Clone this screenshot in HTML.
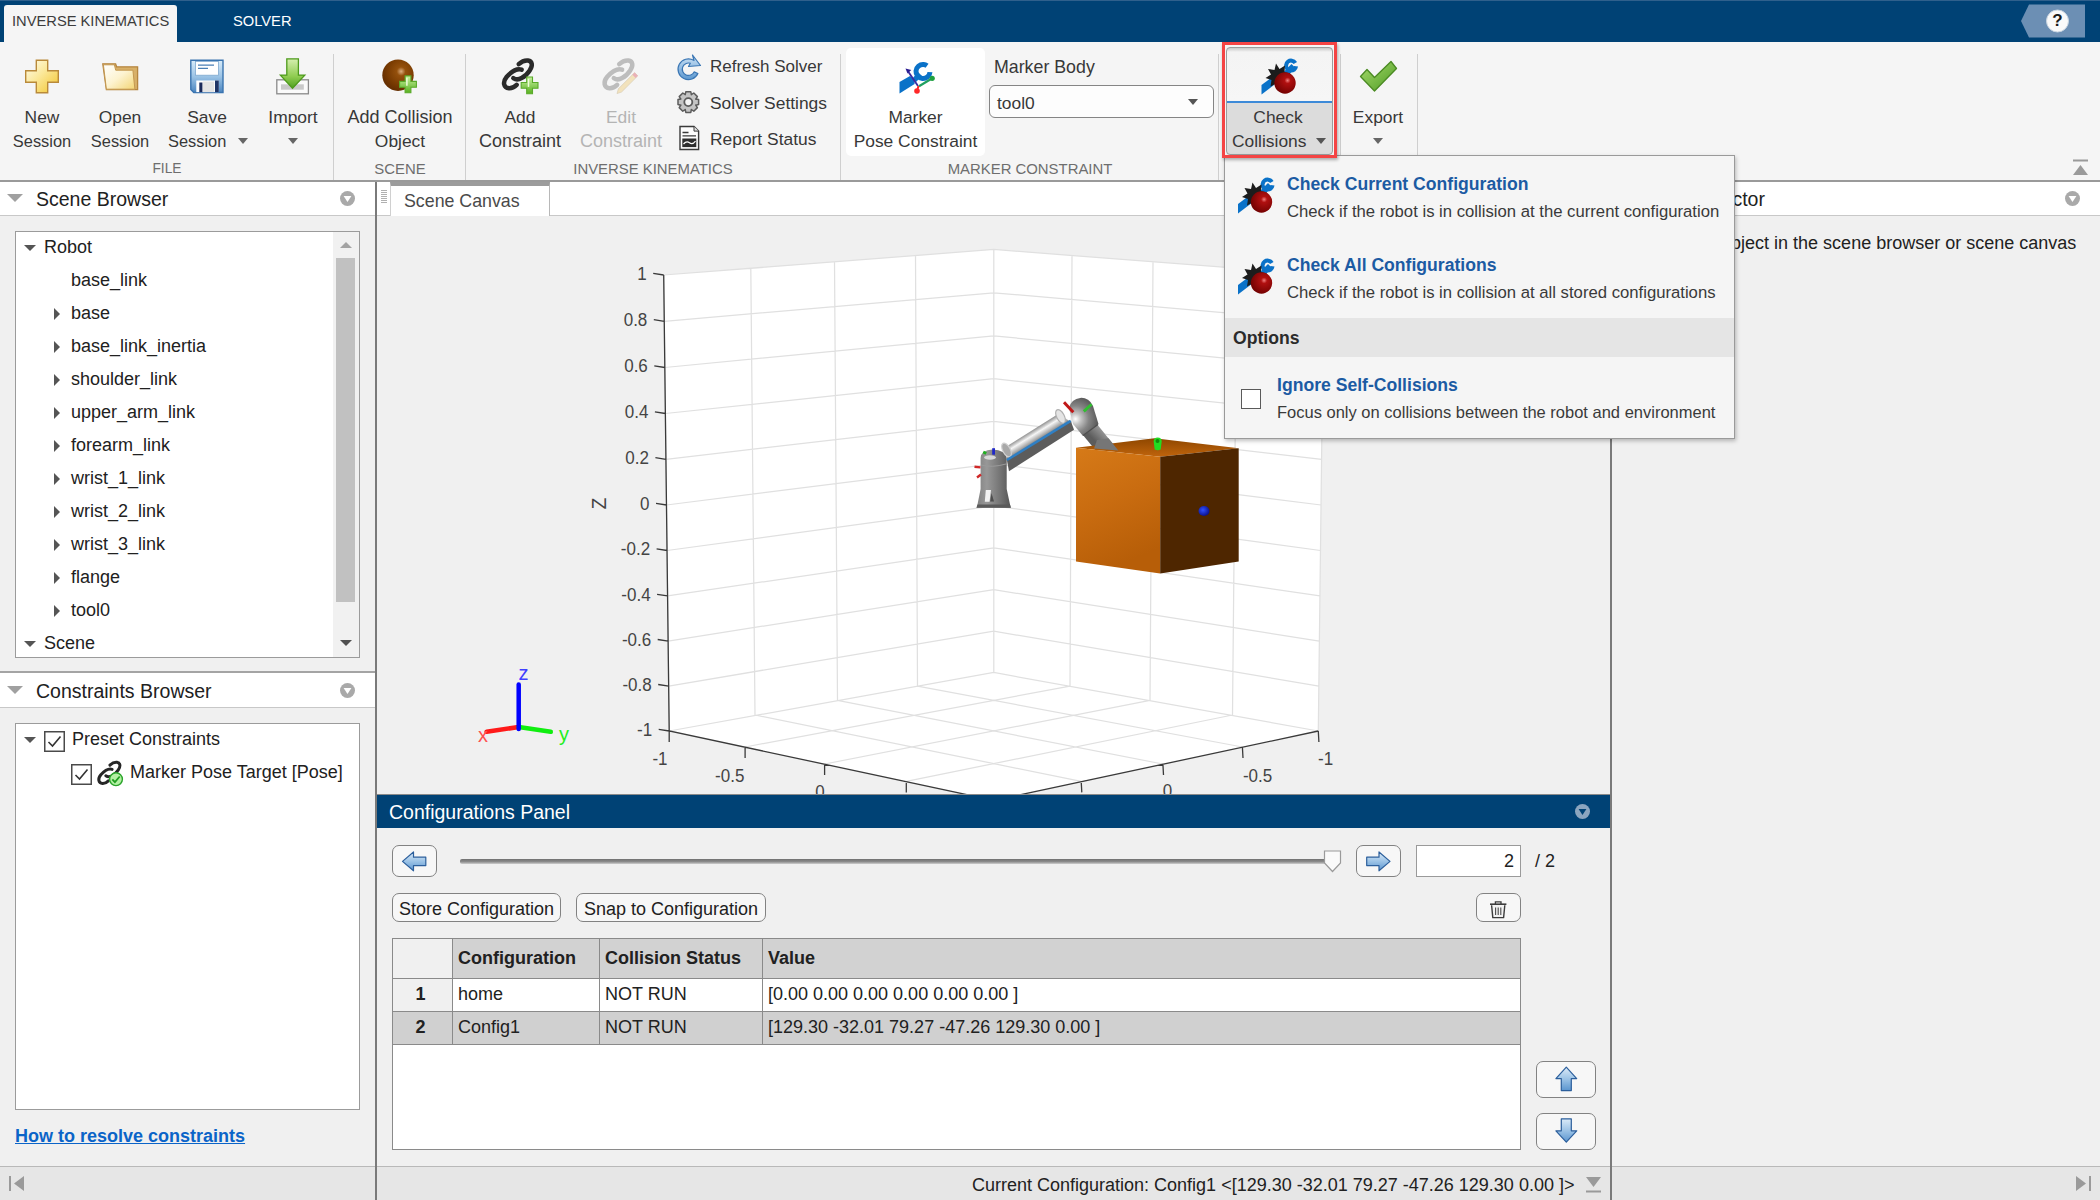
<!DOCTYPE html>
<html lang="en">
<head>
<meta charset="utf-8">
<title>Inverse Kinematics Designer</title>
<style>
html,body{margin:0;padding:0;}
body{width:2100px;height:1200px;position:relative;overflow:hidden;background:#f0f0f0;font-family:"Liberation Sans",sans-serif;font-size:18px;color:#212121;}
.a{position:absolute;}
.t{position:absolute;white-space:pre;line-height:20px;height:20px;}
.c{text-align:center;}
.ts{color:#383838;font-size:17.4px;}
.sec{color:#6e6e6e;font-size:14.9px;}
.vsep{position:absolute;width:1px;background:#cfcfcf;top:54px;height:126px;}
.hdr{position:absolute;background:#fff;height:34px;border-bottom:1px solid #c8c8c8;}
.hdr .t{font-size:19.5px;top:7px;}
.tri{position:absolute;width:0;height:0;border-style:solid;}
.tree{font-size:18px;color:#212121;}
.btn{position:absolute;box-sizing:border-box;border:1.5px solid #828282;border-radius:7px;background:#f7f7f7;}
</style>
</head>
<body>

<!-- ===== top tab bar ===== -->
<div class="a" id="topbar" style="left:0;top:0;width:2100px;height:42px;background:#004275;border-top:1px solid #2f608c;box-sizing:border-box;"></div>
<div class="a" style="left:4px;top:5px;width:173px;height:37px;background:#f5f5f5;border-radius:3px 3px 0 0;"></div>
<div class="t" style="left:12px;top:11px;font-size:14.7px;color:#3c3c3c;">INVERSE KINEMATICS</div>
<div class="t" style="left:233px;top:11px;font-size:14.7px;color:#fff;">SOLVER</div>

<!-- ===== toolstrip ===== -->
<div class="a" id="toolstrip" style="left:0;top:42px;width:2100px;height:138px;background:#f5f5f5;border-bottom:2px solid #9a9a9a;"></div>

<!--TOOLSTRIP-->
<!-- separators -->
<div class="vsep" style="left:333px;"></div>
<div class="vsep" style="left:465px;"></div>
<div class="vsep" style="left:840px;"></div>
<div class="vsep" style="left:1218px;"></div>
<div class="vsep" style="left:1340px;"></div>
<div class="vsep" style="left:1417px;"></div>

<!-- FILE section -->
<div class="t c ts" style="left:0;width:84px;top:107px;">New</div>
<div class="t c ts" style="left:0;width:84px;top:131px;font-size:16.4px;">Session</div>
<div class="t c ts" style="left:78px;width:84px;top:107px;">Open</div>
<div class="t c ts" style="left:78px;width:84px;top:131px;font-size:16.4px;">Session</div>
<div class="t c ts" style="left:165px;width:84px;top:107px;">Save</div>
<div class="t ts" style="left:168px;top:131px;font-size:16.4px;">Session</div>
<div class="tri" style="left:238px;top:138px;border-width:6px 5.5px 0 5.5px;border-color:#666 transparent transparent transparent;"></div>
<div class="t c ts" style="left:251px;width:84px;top:107px;">Import</div>
<div class="tri" style="left:288px;top:138px;border-width:6px 5.5px 0 5.5px;border-color:#666 transparent transparent transparent;"></div>
<div class="t c sec" style="left:126px;width:82px;top:159px;font-size:13.8px;">FILE</div>

<!-- SCENE section -->
<div class="t c ts" style="left:340px;width:120px;top:107px;font-size:18px;">Add Collision</div>
<div class="t c ts" style="left:340px;width:120px;top:131px;">Object</div>
<div class="t c sec" style="left:340px;width:120px;top:159px;">SCENE</div>

<!-- INVERSE KINEMATICS section -->
<div class="t c ts" style="left:470px;width:100px;top:107px;">Add</div>
<div class="t c ts" style="left:470px;width:100px;top:131px;font-size:18px;">Constraint</div>
<div class="t c ts" style="left:571px;width:100px;top:107px;color:#b4b4b4;">Edit</div>
<div class="t c ts" style="left:571px;width:100px;top:131px;font-size:18px;color:#b4b4b4;">Constraint</div>
<div class="t ts" style="left:710px;top:57px;font-size:17px;">Refresh Solver</div>
<div class="t ts" style="left:710px;top:93px;">Solver Settings</div>
<div class="t ts" style="left:710px;top:129px;">Report Status</div>
<div class="t c sec" style="left:553px;width:200px;top:159px;">INVERSE KINEMATICS</div>

<!-- MARKER CONSTRAINT section -->
<div class="a" style="left:846px;top:48px;width:139px;height:108px;background:#fff;border-radius:5px;"></div>
<div class="t c ts" style="left:846px;width:139px;top:107px;">Marker</div>
<div class="t c ts" style="left:846px;width:139px;top:131px;">Pose Constraint</div>
<div class="t ts" style="left:994px;top:57px;font-size:17.8px;">Marker Body</div>
<div class="a" style="left:989px;top:85px;width:225px;height:33px;box-sizing:border-box;border:1.5px solid #858585;border-radius:6px;background:#fdfdfd;"></div>
<div class="t ts" style="left:997px;top:93px;">tool0</div>
<div class="tri" style="left:1188px;top:99px;border-width:6px 5.5px 0 5.5px;border-color:#555 transparent transparent transparent;"></div>
<div class="t c sec" style="left:930px;width:200px;top:159px;">MARKER CONSTRAINT</div>

<!-- Check Collisions -->
<div class="a" style="left:1226px;top:47px;width:107px;height:108px;box-sizing:border-box;border:1px solid #9c9c9c;border-radius:4px;background:linear-gradient(#c9c9c9 0,#f4f4f4 4px,#f6f6f6 53px,#3d8ad8 53px,#3d8ad8 55px,#dcdcdc 55px);"></div>
<div class="t c ts" style="left:1228px;width:100px;top:107px;">Check</div>
<div class="t ts" style="left:1232px;top:131px;">Collisions</div>
<div class="tri" style="left:1316px;top:138px;border-width:6px 5.5px 0 5.5px;border-color:#555 transparent transparent transparent;"></div>
<div class="t c ts" style="left:1338px;width:80px;top:107px;">Export</div>
<div class="tri" style="left:1373px;top:138px;border-width:6px 5.5px 0 5.5px;border-color:#666 transparent transparent transparent;"></div>
<!--/TOOLSTRIP-->

<!--LEFT-->
<!-- left dock -->
<div class="a" style="left:0;top:182px;width:375px;height:984px;background:#f0f0f0;"></div>
<div class="a" style="left:375px;top:182px;width:2px;height:1018px;background:#7a7a7a;"></div>
<div class="hdr" style="left:0;top:182px;width:375px;height:33px;"><div class="tri" style="left:7px;top:12px;border-width:8.5px 8px 0 8px;border-color:#a0a0a0 transparent transparent transparent;"></div><div class="t" style="left:36px;top:7px;">Scene Browser</div><svg class="a" style="left:339px;top:8px;" width="17" height="17" viewBox="0 0 17 17"><circle cx="8.5" cy="8.5" r="7.5" fill="#a9a9a9"/><path d="M4.6 6 L12.4 6 L8.5 12 Z" fill="#fff"/></svg></div>
<div class="a" style="left:15px;top:231px;width:345px;height:427px;box-sizing:border-box;border:1px solid #9b9b9b;background:#fff;"></div>
<div class="a" style="left:333px;top:232px;width:26px;height:425px;background:#f1f1f1;"></div>
<div class="a" style="left:336px;top:258px;width:19px;height:344px;background:#c1c1c1;"></div>
<div class="tri" style="left:340px;top:242px;border-width:0 6px 6px 6px;border-color:transparent transparent #a3a3a3 transparent;"></div>
<div class="tri" style="left:340px;top:640px;border-width:6px 6px 0 6px;border-color:#505050 transparent transparent transparent;"></div>
<div class="tri" style="left:24px;top:245px;border-width:6px 6px 0 6px;border-color:#555 transparent transparent transparent;"></div>
<div class="t tree" style="left:44px;top:237px;">Robot</div>
<div class="t tree" style="left:71px;top:270px;">base_link</div>
<div class="tri" style="left:54px;top:308px;border-width:6px 0 6px 6px;border-color:transparent transparent transparent #555;"></div>
<div class="t tree" style="left:71px;top:303px;">base</div>
<div class="tri" style="left:54px;top:341px;border-width:6px 0 6px 6px;border-color:transparent transparent transparent #555;"></div>
<div class="t tree" style="left:71px;top:336px;">base_link_inertia</div>
<div class="tri" style="left:54px;top:374px;border-width:6px 0 6px 6px;border-color:transparent transparent transparent #555;"></div>
<div class="t tree" style="left:71px;top:369px;">shoulder_link</div>
<div class="tri" style="left:54px;top:407px;border-width:6px 0 6px 6px;border-color:transparent transparent transparent #555;"></div>
<div class="t tree" style="left:71px;top:402px;">upper_arm_link</div>
<div class="tri" style="left:54px;top:440px;border-width:6px 0 6px 6px;border-color:transparent transparent transparent #555;"></div>
<div class="t tree" style="left:71px;top:435px;">forearm_link</div>
<div class="tri" style="left:54px;top:473px;border-width:6px 0 6px 6px;border-color:transparent transparent transparent #555;"></div>
<div class="t tree" style="left:71px;top:468px;">wrist_1_link</div>
<div class="tri" style="left:54px;top:506px;border-width:6px 0 6px 6px;border-color:transparent transparent transparent #555;"></div>
<div class="t tree" style="left:71px;top:501px;">wrist_2_link</div>
<div class="tri" style="left:54px;top:539px;border-width:6px 0 6px 6px;border-color:transparent transparent transparent #555;"></div>
<div class="t tree" style="left:71px;top:534px;">wrist_3_link</div>
<div class="tri" style="left:54px;top:572px;border-width:6px 0 6px 6px;border-color:transparent transparent transparent #555;"></div>
<div class="t tree" style="left:71px;top:567px;">flange</div>
<div class="tri" style="left:54px;top:605px;border-width:6px 0 6px 6px;border-color:transparent transparent transparent #555;"></div>
<div class="t tree" style="left:71px;top:600px;">tool0</div>
<div class="tri" style="left:24px;top:641px;border-width:6px 6px 0 6px;border-color:#555 transparent transparent transparent;"></div>
<div class="t tree" style="left:44px;top:633px;">Scene</div>
<div class="a" style="left:0;top:671px;width:375px;height:2px;background:#a4a4a4;"></div>
<div class="hdr" style="left:0;top:673px;width:375px;height:34px;"><div class="tri" style="left:7px;top:13px;border-width:8.5px 8px 0 8px;border-color:#a0a0a0 transparent transparent transparent;"></div><div class="t" style="left:36px;top:8px;">Constraints Browser</div><svg class="a" style="left:339px;top:9px;" width="17" height="17" viewBox="0 0 17 17"><circle cx="8.5" cy="8.5" r="7.5" fill="#a9a9a9"/><path d="M4.6 6 L12.4 6 L8.5 12 Z" fill="#fff"/></svg></div>
<div class="a" style="left:15px;top:723px;width:345px;height:387px;box-sizing:border-box;border:1px solid #9b9b9b;background:#fff;"></div>
<div class="tri" style="left:24px;top:737px;border-width:6px 6px 0 6px;border-color:#555 transparent transparent transparent;"></div>
<svg class="a" style="left:43.5px;top:731px;" width="21" height="21" viewBox="0 0 21 21"><rect x="0.75" y="0.75" width="19.5" height="19.5" fill="#fff" stroke="#4a4a4a" stroke-width="1.5"/><path d="M4.5 11 L8.5 15 L16.5 5.5" fill="none" stroke="#333" stroke-width="1.6"/></svg>
<div class="t tree" style="left:72px;top:729px;">Preset Constraints</div>
<svg class="a" style="left:70.5px;top:763.5px;" width="21" height="21" viewBox="0 0 21 21"><rect x="0.75" y="0.75" width="19.5" height="19.5" fill="#fff" stroke="#4a4a4a" stroke-width="1.5"/><path d="M4.5 11 L8.5 15 L16.5 5.5" fill="none" stroke="#333" stroke-width="1.6"/></svg>
<!--ICON_LINKOK-->
<div class="t tree" style="left:130px;top:762px;">Marker Pose Target [Pose]</div>
<div class="t" style="left:15px;top:1126px;font-weight:bold;color:#0b64c8;text-decoration:underline;">How to resolve constraints</div>
<!--/LEFT-->

<!--CENTER-->
<!-- center: document area -->
<div class="a" style="left:377px;top:182px;width:1234px;height:33px;background:#fff;border-bottom:1px solid #c8c8c8;"></div>
<div class="a" style="left:381px;top:190px;width:6px;height:14px;background:repeating-linear-gradient(#b0b0b0 0,#b0b0b0 1px,#fff 1px,#fff 2px);"></div>
<div class="a" style="left:390px;top:182px;width:160px;height:34px;background:#fff;border-right:1px solid #b8b8b8;border-left:1px solid #d0d0d0;border-top:4px solid #9c9c9c;box-sizing:border-box;"></div>
<div class="t" style="left:404px;top:191px;font-size:17.8px;color:#4a4a4a;">Scene Canvas</div>
<div class="a" style="left:377px;top:216px;width:1234px;height:579px;background:#f0f0f0;overflow:hidden;"><!--PLOTB--><svg class="a" style="left:0;top:0;" width="1234" height="579" viewBox="377 216 1234 579" font-family="Liberation Sans, sans-serif">
<polygon points="663.7,275.0 993.8,249.5 1323.8,275.0 1318.3,731.0 993.8,800.4 669.2,731.0" fill="#fff"/>
<path d="M663.7,275.0L669.2,731.0M1323.8,275.0L1318.3,731.0M750.8,267.9L755.0,715.0M1236.8,267.9L1232.5,715.0M834.5,261.6L837.5,700.4M1153.0,261.6L1150.0,700.4M915.5,255.4L917.5,686.1M1072.0,255.4L1070.0,686.1M993.8,249.5L993.8,672.5M663.7,275.0L993.75,249.5L1323.8,275.0M664.3,321.3L993.75,292.8L1323.2,321.3M664.8,367.5L993.75,335.9L1322.7,367.5M665.4,413.5L993.75,378.7L1322.1,413.5M665.9,459.3L993.75,421.3L1321.6,459.3M666.5,505.0L993.75,463.8L1321.0,505.0M667.1,550.5L993.75,505.9L1320.4,550.5M667.6,595.9L993.75,547.9L1319.9,595.9M668.2,641.1L993.75,589.7L1319.3,641.1M668.7,686.1L993.75,631.2L1318.8,686.1M669.2,731.0L993.75,672.5L1318.3,731.0M755.0,715.0L1081.2,781.4M1232.5,715.0L906.3,781.4M837.5,700.4L1162.9,764.0M1150.0,700.4L824.6,764.0M917.5,686.1L1242.4,747.0M1070.0,686.1L745.1,747.0" fill="none" stroke="#e0e0e0" stroke-width="1.25"/>
<path d="M663.7,275.0L669.2,731.0L993.8,800.4L1318.3,731.0M663.7,275.0l-10.5,-1.6M664.3,321.3l-10.5,-1.6M664.8,367.5l-10.5,-1.6M665.4,413.5l-10.5,-1.6M665.9,459.3l-10.5,-1.6M666.5,505.0l-10.5,-1.6M667.1,550.5l-10.5,-1.6M667.6,595.9l-10.5,-1.6M668.2,641.1l-10.5,-1.6M668.7,686.1l-10.5,-1.6M669.2,731.0l-10.5,-1.6M669.2,731.0l0,11M745.1,747.0l0,11M824.6,764.0l0,11M906.3,781.4l0,11M1318.3,731.0l0.6,11M1242.4,747.0l0.6,11M1162.9,764.0l0.6,11M1081.2,781.4l0.6,11" fill="none" stroke="#3a3a3a" stroke-width="1.3"/>
<g font-size="19" fill="#444444">
<text transform="translate(646.7,279.6) scale(0.895,1)" text-anchor="end">1</text>
<text transform="translate(647.3,325.9) scale(0.895,1)" text-anchor="end">0.8</text>
<text transform="translate(647.8,372.1) scale(0.895,1)" text-anchor="end">0.6</text>
<text transform="translate(648.4,418.1) scale(0.895,1)" text-anchor="end">0.4</text>
<text transform="translate(648.9,463.9) scale(0.895,1)" text-anchor="end">0.2</text>
<text transform="translate(649.5,509.6) scale(0.895,1)" text-anchor="end">0</text>
<text transform="translate(650.1,555.1) scale(0.895,1)" text-anchor="end">-0.2</text>
<text transform="translate(650.6,600.5) scale(0.895,1)" text-anchor="end">-0.4</text>
<text transform="translate(651.2,645.7) scale(0.895,1)" text-anchor="end">-0.6</text>
<text transform="translate(651.7,690.7) scale(0.895,1)" text-anchor="end">-0.8</text>
<text transform="translate(652.2,735.6) scale(0.895,1)" text-anchor="end">-1</text>
<text transform="translate(660.0,765.4) scale(0.895,1)" text-anchor="middle">-1</text><text transform="translate(729.7,781.7) scale(0.895,1)" text-anchor="middle">-0.5</text><text transform="translate(820.0,798.2) scale(0.895,1)" text-anchor="middle">0</text>
<text transform="translate(1325.6,765.4) scale(0.895,1)" text-anchor="middle">-1</text><text transform="translate(1257.6,781.7) scale(0.895,1)" text-anchor="middle">-0.5</text><text transform="translate(1167.5,797.4) scale(0.895,1)" text-anchor="middle">0</text>
<text transform="translate(606.3,503.5) rotate(-90) scale(0.895,1)" text-anchor="middle" font-size="21">Z</text>
</g>
<!--S3B--><defs>
<linearGradient id="bxL" x1="0" y1="0" x2="0.3" y2="1"><stop offset="0" stop-color="#d67a18"/><stop offset="0.5" stop-color="#c96c10"/><stop offset="1" stop-color="#b75e08"/></linearGradient>
<linearGradient id="bxT" x1="0" y1="0" x2="0" y2="1"><stop offset="0" stop-color="#8e4700"/><stop offset="1" stop-color="#c0640c"/></linearGradient>
<linearGradient id="arm1" gradientUnits="userSpaceOnUse" x1="1032" y1="430" x2="1038.5" y2="440.5"><stop offset="0" stop-color="#8a8a8a"/><stop offset="0.4" stop-color="#f6f6f6"/><stop offset="0.75" stop-color="#b4b4b4"/><stop offset="1" stop-color="#808080"/></linearGradient>
<linearGradient id="arm2" gradientUnits="userSpaceOnUse" x1="1102" y1="424" x2="1090" y2="436"><stop offset="0" stop-color="#a8a8a8"/><stop offset="0.5" stop-color="#838383"/><stop offset="1" stop-color="#5c5c5c"/></linearGradient>
<linearGradient id="base" x1="0" y1="0" x2="1" y2="0"><stop offset="0" stop-color="#808080"/><stop offset="0.3" stop-color="#989898"/><stop offset="0.65" stop-color="#787878"/><stop offset="1" stop-color="#555555"/></linearGradient>
<radialGradient id="elb" gradientUnits="userSpaceOnUse" cx="1075.5" cy="419" r="22"><stop offset="0" stop-color="#ffffff"/><stop offset="0.25" stop-color="#c4c4c4"/><stop offset="0.6" stop-color="#858585"/><stop offset="1" stop-color="#5c5c5c"/></radialGradient>
<radialGradient id="bdot" cx="0.4" cy="0.4" r="0.6"><stop offset="0" stop-color="#3050ff"/><stop offset="1" stop-color="#0a1290"/></radialGradient>
</defs>
<path d="M976.5,507.7 L977.5,504.5 L980.6,489 L980.6,458 Q981,450 992.5,449.4 Q1005.5,450 1006.7,458 L1006.7,489 L1010,504.5 L1010.8,507.7 Z" fill="url(#base)"/>
<path d="M976.5,507.7 L977.5,504.5 L1010,504.5 L1010.8,507.7Z" fill="#5a5a5a"/>
<path d="M985.8,490 L991,490 L989.5,501.8 L984.8,501.8 Z" fill="#f2f2f2"/><path d="M991.5,493l2.5,8.5h-3.8z" fill="#4e4e4e"/>
<ellipse cx="990" cy="457.5" rx="6" ry="2.2" fill="#d8d8d8"/><path d="M981,465q11,3 25,-1" stroke="#9a9a9a" stroke-width="1" fill="none"/>
<path d="M974.5,466.8l6,0.6M977,477.5l4,-3" stroke="#d02828" stroke-width="2.4"/>
<path d="M983.2,452l3,1.6" stroke="#20b020" stroke-width="2.8"/><path d="M993.6,448.2l0,6.5" stroke="#2028c8" stroke-width="2.8"/>
<path d="M1006.9,460 L1070.7,420.8 L1074,429.8 L1009,471.3 Z" fill="#5c5c5c"/>
<path d="M1006.5,446.5 L1059,413.5 L1070,421.5 L1007,460 Z" fill="url(#arm1)"/>
<ellipse cx="1006.5" cy="450" rx="3.8" ry="7.5" transform="rotate(-28 1006.5 450)" fill="#a8a8a8" stroke="#d0d0d0" stroke-width="1.2"/>
<ellipse cx="1060.5" cy="416.5" rx="3.8" ry="7.5" transform="rotate(-28 1060.5 416.5)" fill="#e4e4e4" stroke="#b0b0b0" stroke-width="1.2"/>
<path d="M1006.9,460 L1070.7,420.8" stroke="#2f7fc4" stroke-width="2.6"/>
<path d="M1097.3,424.4 L1118.3,450.4 L1095.5,450.2 L1082.7,434.8 Z" fill="url(#arm2)"/>
<path d="M1069,408 a12.5,12.5 0 0 1 24,-2 L1098.5,424 L1083,436 L1073,424 Z" fill="url(#elb)"/>
<path d="M1083,435.5 L1098,424.5" stroke="#4e4e4e" stroke-width="1.2"/>
<path d="M1064,402.3l9.3,10" stroke="#c01818" stroke-width="3"/><path d="M1083.8,411.4l7.8,-7.2" stroke="#30c030" stroke-width="2.8"/>
<polygon points="1076,447.8 1154.4,438.3 1238.7,448.2 1160.2,456.7" fill="url(#bxT)"/>
<polygon points="1076,447.8 1160.2,456.7 1160.2,573.5 1076,561.5" fill="url(#bxL)"/>
<polygon points="1160.2,456.7 1238.7,448.2 1238.7,561.5 1160.2,573.5" fill="#4e2600"/>
<path d="M1094,448.4 L1118.3,450.6 L1108.5,438.3 L1097,440 Z" fill="#767676"/>
<path d="M1157.7,437.5 q4,0 4,4 l-1,8 q-3,1.5 -6,0 l-1,-8 q0,-4 4,-4Z" fill="#22dd22"/><circle cx="1157.5" cy="441" r="2" fill="#109010"/>
<ellipse cx="1204" cy="511" rx="5.5" ry="5" fill="url(#bdot)"/><!--S3E-->
<path d="M518.7,727L486.6,731.8" stroke="#ff1a1a" stroke-width="4.5" stroke-linecap="round"/><path d="M518.7,727L550.8,731.8" stroke="#10ee10" stroke-width="4.5" stroke-linecap="round"/><path d="M518.7,729L518.7,684.5" stroke="#0000ff" stroke-width="4.5" stroke-linecap="round"/>
<g font-size="20"><text x="518.5" y="680" fill="#4040ff">z</text><text x="478" y="741.5" fill="#ff5050">x</text><text x="559" y="741" fill="#22ee22">y</text></g>
</svg><!--PLOTE--></div>
<div class="a" style="left:1610px;top:182px;width:2px;height:1018px;background:#7a7a7a;"></div>
<div class="a" style="left:377px;top:794px;width:1233px;height:34px;background:#004275;border-top:1px solid #8a8a8a;box-sizing:border-box;"></div>
<div class="t" style="left:389px;top:802px;font-size:19.5px;color:#fff;">Configurations Panel</div>
<svg class="a" style="left:1574px;top:803px;" width="17" height="17" viewBox="0 0 17 17"><circle cx="8.5" cy="8.5" r="7.5" fill="#8ba5bf"/><path d="M4.6 6 L12.4 6 L8.5 12 Z" fill="#004275"/></svg>
<div class="btn" style="left:392px;top:845px;width:45px;height:32px;"></div><!--ICON_PREV-->
<div class="a" style="left:460px;top:859px;width:866px;height:5px;background:linear-gradient(#707070,#8c8c8c 55%,#cfcfcf);border-radius:2px;"></div>
<svg class="a" style="left:1323px;top:850px;" width="19" height="23" viewBox="0 0 19 23"><path d="M1.5 1 L17.5 1 L17.5 13 L9.5 21.5 L1.5 13 Z" fill="#fafafa" stroke="#9a9a9a" stroke-width="1.2"/></svg>
<div class="btn" style="left:1356px;top:845px;width:45px;height:32px;"></div><!--ICON_NEXT-->
<div class="a" style="left:1416px;top:845px;width:105px;height:32px;box-sizing:border-box;border:1px solid #9a9a9a;background:#fff;"></div>
<div class="t" style="left:1416px;width:98px;top:851px;text-align:right;">2</div>
<div class="t" style="left:1535px;top:851px;">/ 2</div>
<div class="btn" style="left:392px;top:893px;width:169px;height:29px;"></div><div class="t c" style="left:392px;width:169px;top:899px;">Store Configuration</div>
<div class="btn" style="left:576px;top:893px;width:190px;height:29px;"></div><div class="t c" style="left:576px;width:190px;top:899px;">Snap to Configuration</div>
<div class="btn" style="left:1476px;top:893px;width:45px;height:29px;"></div><!--ICON_TRASH-->
<div class="a" style="left:392px;top:938px;width:1129px;height:212px;box-sizing:border-box;border:1px solid #8a8a8a;background:#fff;"></div>
<div class="a" style="left:393px;top:939px;width:59px;height:39px;background:#f0f0f0;"></div>
<div class="a" style="left:452px;top:939px;width:1068px;height:39px;background:#d2d2d2;"></div>
<div class="a" style="left:393px;top:979px;width:59px;height:32px;background:#f0f0f0;"></div>
<div class="a" style="left:393px;top:1012px;width:1127px;height:32px;background:#d0d0d0;"></div>
<div class="a" style="left:393px;top:978px;width:1127px;height:1px;background:#8a8a8a;"></div>
<div class="a" style="left:393px;top:1011px;width:1127px;height:1px;background:#8a8a8a;"></div>
<div class="a" style="left:393px;top:1044px;width:1127px;height:1px;background:#8a8a8a;"></div>
<div class="a" style="left:452px;top:939px;width:1px;height:106px;background:#8a8a8a;"></div>
<div class="a" style="left:599px;top:939px;width:1px;height:106px;background:#8a8a8a;"></div>
<div class="a" style="left:762px;top:939px;width:1px;height:106px;background:#8a8a8a;"></div>
<div class="t" style="left:458px;top:948px;font-weight:bold;">Configuration</div>
<div class="t" style="left:605px;top:948px;font-weight:bold;">Collision Status</div>
<div class="t" style="left:768px;top:948px;font-weight:bold;">Value</div>
<div class="t c" style="left:393px;width:55px;top:984px;font-weight:bold;">1</div>
<div class="t" style="left:458px;top:984px;">home</div>
<div class="t" style="left:605px;top:984px;">NOT RUN</div>
<div class="t" style="left:768px;top:984px;">[0.00 0.00 0.00 0.00 0.00 0.00 ]</div>
<div class="t c" style="left:393px;width:55px;top:1017px;font-weight:bold;">2</div>
<div class="t" style="left:458px;top:1017px;">Config1</div>
<div class="t" style="left:605px;top:1017px;">NOT RUN</div>
<div class="t" style="left:768px;top:1017px;">[129.30 -32.01 79.27 -47.26 129.30 0.00 ]</div>
<div class="btn" style="left:1536px;top:1061px;width:60px;height:37px;"></div><!--ICON_UP-->
<div class="btn" style="left:1536px;top:1113px;width:60px;height:37px;"></div><!--ICON_DOWN-->
<!--/CENTER-->

<!--RIGHT-->
<!-- right dock -->
<div class="hdr" style="left:1612px;top:182px;width:488px;height:33px;"><div class="t" style="left:12px;top:7px;">Scene Inspector</div><svg class="a" style="left:452px;top:8px;" width="17" height="17" viewBox="0 0 17 17"><circle cx="8.5" cy="8.5" r="7.5" fill="#a9a9a9"/><path d="M4.6 6 L12.4 6 L8.5 12 Z" fill="#fff"/></svg></div>
<div class="t" style="left:1641px;top:233px;">Select an object in the scene browser or scene canvas</div>
<svg class="a" style="left:2072px;top:158px;" width="18" height="20" viewBox="0 0 18 20"><rect x="1" y="1.5" width="15" height="2" fill="#9a9a9a"/><path d="M1 17 L16 17 L8.5 7 Z" fill="#9a9a9a"/></svg>
<!--/RIGHT-->

<!--STATUS-->
<!-- status bar -->
<div class="a" style="left:0;top:1166px;width:2100px;height:34px;background:#e6e6e6;border-top:1px solid #b9b9b9;box-sizing:border-box;"></div>
<div class="a" style="left:375px;top:1166px;width:2px;height:34px;background:#7a7a7a;"></div>
<div class="a" style="left:1610px;top:1166px;width:2px;height:34px;background:#7a7a7a;"></div>
<div class="t" style="left:972px;top:1175px;">Current Configuration: Config1 &lt;[129.30 -32.01 79.27 -47.26 129.30 0.00 ]&gt;</div>
<svg class="a" style="left:1585px;top:1175px;" width="18" height="20" viewBox="0 0 18 20"><rect x="1" y="15.5" width="15" height="2" fill="#9a9a9a"/><path d="M1 2 L16 2 L8.5 12 Z" fill="#9a9a9a"/></svg>
<svg class="a" style="left:8px;top:1175px;" width="18" height="18" viewBox="0 0 18 18"><rect x="1" y="1" width="2" height="15" fill="#9a9a9a"/><path d="M16 1 L16 16 L6 8.5 Z" fill="#9a9a9a"/></svg>
<svg class="a" style="left:2074px;top:1175px;" width="18" height="18" viewBox="0 0 18 18"><rect x="15" y="1" width="2" height="15" fill="#9a9a9a"/><path d="M2 1 L2 16 L12 8.5 Z" fill="#9a9a9a"/></svg>
<!--/STATUS-->

<!--MENU-->
<!-- dropdown menu -->
<div class="a" id="menu" style="left:1224px;top:155px;width:511px;height:284px;box-sizing:border-box;border:1px solid #9a9a9a;background:#f5f5f5;box-shadow:1px 2px 4px rgba(0,0,0,.25);"></div>
<div class="a" style="left:1225px;top:318px;width:509px;height:39px;background:#e5e5e5;"></div>
<div class="t" style="left:1287px;top:174px;font-weight:bold;font-size:17.6px;color:#1c5ba3;">Check Current Configuration</div>
<div class="t" style="left:1287px;top:202px;font-size:16.7px;color:#3a3a3a;">Check if the robot is in collision at the current configuration</div>
<div class="t" style="left:1287px;top:255px;font-weight:bold;font-size:17.6px;color:#1c5ba3;">Check All Configurations</div>
<div class="t" style="left:1287px;top:283px;font-size:16.7px;color:#3a3a3a;">Check if the robot is in collision at all stored configurations</div>
<div class="t" style="left:1233px;top:328px;font-weight:bold;font-size:17.6px;color:#2b2b2b;">Options</div>
<div class="a" style="left:1241px;top:389px;width:20px;height:20px;box-sizing:border-box;border:1px solid #5a5a5a;background:#fff;"></div>
<div class="t" style="left:1277px;top:375px;font-weight:bold;font-size:17.6px;color:#1c5ba3;">Ignore Self-Collisions</div>
<div class="t" style="left:1277px;top:402px;font-size:16.5px;color:#3a3a3a;">Focus only on collisions between the robot and environment</div>
<div class="a" style="left:1222px;top:42px;width:115px;height:116px;box-sizing:border-box;border:3px solid #f44444;z-index:6;box-shadow:1px 2px 3px rgba(0,0,0,.3);"></div>
<!--/MENU-->

<!--ICB--><svg class="a" style="left:0;top:0;" width="2100" height="182" viewBox="0 0 2100 182">
<defs>
<linearGradient id="gPlus" x1="0" y1="0" x2="1" y2="1"><stop offset="0" stop-color="#fffdf0"/><stop offset="0.45" stop-color="#fbe89a"/><stop offset="1" stop-color="#f2c42c"/></linearGradient>
<linearGradient id="gFold" x1="0" y1="0" x2="1" y2="1"><stop offset="0" stop-color="#ffffff"/><stop offset="0.5" stop-color="#fdf3d0"/><stop offset="1" stop-color="#f3d574"/></linearGradient>
<linearGradient id="gSave" x1="0" y1="0" x2="0" y2="1"><stop offset="0" stop-color="#d8ecfa"/><stop offset="0.5" stop-color="#9cc4e6"/><stop offset="1" stop-color="#4c86c0"/></linearGradient>
<linearGradient id="gGreen" x1="0" y1="0" x2="0" y2="1"><stop offset="0" stop-color="#d6efb0"/><stop offset="0.6" stop-color="#8fcc50"/><stop offset="1" stop-color="#4fa020"/></linearGradient>
<linearGradient id="gGP" x1="0" y1="0" x2="0" y2="1"><stop offset="0" stop-color="#c8f0a0"/><stop offset="1" stop-color="#58b020"/></linearGradient>
<radialGradient id="gBall" cx="0.6" cy="0.38" r="0.7"><stop offset="0" stop-color="#dcae80"/><stop offset="0.2" stop-color="#94500c"/><stop offset="0.6" stop-color="#7a3c02"/><stop offset="1" stop-color="#5e2a00"/></radialGradient>
<radialGradient id="gRed" cx="0.62" cy="0.38" r="0.7"><stop offset="0" stop-color="#f08080"/><stop offset="0.2" stop-color="#b01010"/><stop offset="1" stop-color="#6c0000"/></radialGradient>
<linearGradient id="gRef" x1="0" y1="0" x2="0" y2="1"><stop offset="0" stop-color="#cfe4f6"/><stop offset="1" stop-color="#5c98d0"/></linearGradient>
<linearGradient id="gChk" x1="0" y1="0" x2="1" y2="1"><stop offset="0" stop-color="#a8dc6c"/><stop offset="1" stop-color="#4c9a24"/></linearGradient>
</defs>
<path d="M36.3,60.2h11.4v10.6h10.6v11.4h-10.6v10.6h-11.4v-10.6h-10.6v-11.4h10.6z" fill="url(#gPlus)" stroke="#b98a3a" stroke-width="1.4"/>
<path d="M102.8,63.8h12.8l1,3h21v22.8h-31.2z" fill="#d8b068" stroke="#b5853f" stroke-width="1.3"/>
<path d="M103.4,64.8h11l1.3,5.4h17.2l2,19h-28.5z" fill="url(#gFold)" stroke="#c49850" stroke-width="1"/>
<path d="M190.8,60.3h32.2v32.2h-29.2l-3,-3z" fill="url(#gSave)" stroke="#3a74b0" stroke-width="1.4"/>
<rect x="195.5" y="61.4" width="23" height="13.8" fill="#fff" stroke="#7fa8cf" stroke-width="0.8"/><path d="M198,65.2h16M198,68.3h10" stroke="#4a7fb5" stroke-width="1.2"/>
<rect x="196.3" y="80.5" width="22.5" height="11.6" fill="#fff"/><rect x="199.3" y="82.5" width="3.2" height="9.6" fill="#1a2a5a"/><rect x="202.8" y="81.5" width="11.4" height="10.6" fill="#e4e4e4"/><rect x="215" y="80.5" width="3.8" height="11.6" fill="#1f3566"/>
<rect x="276.8" y="79.8" width="31.6" height="14" fill="#fafafa" stroke="#8a8a8a" stroke-width="1.3"/><rect x="281" y="84.3" width="22.8" height="5.4" fill="#c9c9c9"/>
<path d="M286.8,58.8h11.6v16.3h6.4l-12.3,13.2l-12.1,-13.2h6.4z" fill="url(#gGreen)" stroke="#4e9a1c" stroke-width="1.3"/>
<circle cx="398" cy="75.2" r="15.7" fill="url(#gBall)"/><g transform="translate(408,84.3)"><path d="M-2.9,-8.4h5.8v5.5h5.5v5.8h-5.5v5.5h-5.8v-5.5h-5.5v-5.8h5.5z" fill="url(#gGP)" stroke="#5aaa2a" stroke-width="1.1"/><path d="M-1.1,-6.5v8" stroke="#effcdc" stroke-width="1.5"/></g>
<g transform="translate(518,74.5) scale(0.9) translate(-518,-74.5)" fill="none" stroke="#2a2a2a" stroke-width="5.0" stroke-linecap="round"><path d="M522,69.2C517,67.5 512,70 505.5,77C500.5,83 502,89.3 508,89.8C512,90 514.5,88 516.5,86"/><path d="M518.8,63C522,60 526,58.6 529,58.9C533.6,59.6 535,64 531,70C528,74.5 525,77 522,78.5C518.5,80.4 515,80 512.8,78.5"/></g>
<g transform="translate(529.6,85.4)"><path d="M-2.9,-8.4h5.8v5.5h5.5v5.8h-5.5v5.5h-5.8v-5.5h-5.5v-5.8h5.5z" fill="url(#gGP)" stroke="#5aaa2a" stroke-width="1.1"/><path d="M-1.1,-6.5v8" stroke="#effcdc" stroke-width="1.5"/></g>
<g transform="translate(618.5,74.5) scale(0.9) translate(-518,-74.5)" fill="none" stroke="#bdbdbd" stroke-width="5.0" stroke-linecap="round"><path d="M522,69.2C517,67.5 512,70 505.5,77C500.5,83 502,89.3 508,89.8C512,90 514.5,88 516.5,86"/><path d="M518.8,63C522,60 526,58.6 529,58.9C533.6,59.6 535,64 531,70C528,74.5 525,77 522,78.5C518.5,80.4 515,80 512.8,78.5"/></g>
<path d="M617,93.6l1.4,-4.8l16.2,-16.2l3.2,3.2l-16.2,16.2z" fill="#f2e2bc" stroke="#d8cdb4" stroke-width="0.7"/><path d="M634.6,72.6l3.2,3.2l-2.2,2.2l-3.2,-3.2z" fill="#eab0b8"/>
<path d="M694,60.5l-1.5,-5.5l8,10.5l-12,1l1.8,-3.2a6.2,6.2 0 1 0 3.8,8.6l3.8,1.6a10.4,10.4 0 1 1 -4.2,-13.2z" fill="url(#gRef)" stroke="#3a76b4" stroke-width="1.2" stroke-linejoin="round"/>
<polygon points="698.6,99.6 698.6,104.6 695.7,105.2 695.7,105.1 697.4,107.6 693.8,111.2 691.3,109.5 691.4,109.5 690.8,112.4 685.8,112.4 685.2,109.5 685.3,109.5 682.8,111.2 679.2,107.6 680.9,105.1 680.9,105.2 678.0,104.6 678.0,99.6 680.9,99.0 680.9,99.1 679.2,96.6 682.8,93.0 685.3,94.7 685.2,94.7 685.8,91.8 690.8,91.8 691.4,94.7 691.3,94.7 693.8,93.0 697.4,96.6 695.7,99.1 695.7,99.0" fill="#c4c4c4" stroke="#5c5c5c" stroke-width="1.5" stroke-linejoin="round"/><circle cx="688.3" cy="102.1" r="4" fill="#f5f5f5" stroke="#5c5c5c" stroke-width="1.8"/>
<path d="M680,126.5h14l4.6,4.6v18.4h-18.6z" fill="#fdfdfd" stroke="#3a3a3a" stroke-width="1.4"/><path d="M694,126.5v4.6h4.6" fill="#e0e0e0" stroke="#3a3a3a" stroke-width="1"/><path d="M682.5,132.5h6M682.5,135.8h13.5" stroke="#3a3a3a" stroke-width="1.3"/><rect x="682.3" y="138.5" width="14" height="8.6" fill="#2c2c2c"/><path d="M683.5,144q3,-3.5 6,-1.2t6,-1.6" stroke="#fff" stroke-width="1.2" fill="none"/>
<path d="M899.5,82L910,76l4.6,3.6v4.4L899.5,93.6z" fill="#0a72c8"/>
<circle cx="923" cy="71.5" r="7" fill="none" stroke="#0a72c8" stroke-width="5" stroke-dasharray="36.5 7.5" transform="rotate(5 923 71.5)"/><path d="M912,79l6,-7l4,4l-6,6z" fill="#0a72c8"/>
<path d="M918,86L908.5,72" stroke="#3a2aa0" stroke-width="1.8"/><path d="M905.5,68.5l5.8,1.4l-3.8,3.6z" fill="#2a1c90"/>
<path d="M919,86.2L931,79" stroke="#20a060" stroke-width="2.2"/><circle cx="932.2" cy="78.3" r="2.6" fill="#20a040"/>
<path d="M918.5,86l-1.2,4" stroke="#ff2020" stroke-width="2"/><circle cx="917" cy="91" r="2.8" fill="#ff2828"/>
<g transform="translate(1261.5,58)"><path d="M0,27 L0,36.5 L19,22 L19,13.5 L12,18Z" fill="#0a72c8"/><circle cx="29.6" cy="7.6" r="5" fill="none" stroke="#0a72c8" stroke-width="4" stroke-dasharray="27.2 4.2" transform="rotate(8 29.6 7.6)"/><path d="M22,14 L30,6 L34,10 L25,19Z" fill="#0a72c8"/><path d="M14.5,5.5l3.5,5.5l5.5,-3.5l-0.5,6.5l6,1.5l-5,4l3,5.5l-6.5,-0.5l-2,6l-4,-5l-5.5,3l1,-6.5l-6,-2l5.5,-3.5l-3,-5.5l6.5,1z" fill="#1c1c1c"/><circle cx="23.5" cy="25" r="10.7" fill="url(#gRed)"/></g>
<path d="M1360.5,76.5l6.5,-7l7.5,8l16.5,-16l5.5,7l-22,22.5z" fill="url(#gChk)" stroke="#4a8a22" stroke-width="1.3" stroke-linejoin="round"/>
<path d="M2029,4.5h56v33h-56l-8,-16.5z" fill="#6c8fb4"/><circle cx="2057.5" cy="21" r="11" fill="#fafafa" stroke="#c8d4e0" stroke-width="1"/>
</svg>
<div class="t c" style="left:2047px;width:21px;top:11px;font-weight:bold;font-size:17px;color:#1a1a1a;">?</div>
<svg class="a" style="left:1225px;top:156px;z-index:5;" width="80" height="282" viewBox="1225 156 80 282"><g transform="translate(1238,177)"><path d="M0,27 L0,36.5 L19,22 L19,13.5 L12,18Z" fill="#0a72c8"/><circle cx="29.6" cy="7.6" r="5" fill="none" stroke="#0a72c8" stroke-width="4" stroke-dasharray="27.2 4.2" transform="rotate(8 29.6 7.6)"/><path d="M22,14 L30,6 L34,10 L25,19Z" fill="#0a72c8"/><path d="M14.5,5.5l3.5,5.5l5.5,-3.5l-0.5,6.5l6,1.5l-5,4l3,5.5l-6.5,-0.5l-2,6l-4,-5l-5.5,3l1,-6.5l-6,-2l5.5,-3.5l-3,-5.5l6.5,1z" fill="#1c1c1c"/><circle cx="23.5" cy="25" r="10.7" fill="url(#gRed)"/></g><g transform="translate(1238,258)"><path d="M0,27 L0,36.5 L19,22 L19,13.5 L12,18Z" fill="#0a72c8"/><circle cx="29.6" cy="7.6" r="5" fill="none" stroke="#0a72c8" stroke-width="4" stroke-dasharray="27.2 4.2" transform="rotate(8 29.6 7.6)"/><path d="M22,14 L30,6 L34,10 L25,19Z" fill="#0a72c8"/><path d="M14.5,5.5l3.5,5.5l5.5,-3.5l-0.5,6.5l6,1.5l-5,4l3,5.5l-6.5,-0.5l-2,6l-4,-5l-5.5,3l1,-6.5l-6,-2l5.5,-3.5l-3,-5.5l6.5,1z" fill="#1c1c1c"/><circle cx="23.5" cy="25" r="10.7" fill="url(#gRed)"/></g></svg>
<svg class="a" style="left:0;top:740px;" width="1620" height="420" viewBox="0 740 1620 420">
<defs><linearGradient id="gArH" x1="0" y1="0" x2="0" y2="1"><stop offset="0" stop-color="#dcebf8"/><stop offset="0.5" stop-color="#9cc3e6"/><stop offset="1" stop-color="#5b95cf"/></linearGradient></defs>
<g transform="translate(109.4,773) scale(0.685) translate(-518,-74.5)" fill="none" stroke="#262626" stroke-width="4.4" stroke-linecap="round"><path d="M522,69.2C517,67.5 512,70 505.5,77C500.5,83 502,89.3 508,89.8C512,90 514.5,88 516.5,86"/><path d="M518.8,63C522,60 526,58.6 529,58.9C533.6,59.6 535,64 531,70C528,74.5 525,77 522,78.5C518.5,80.4 515,80 512.8,78.5"/></g>
<circle cx="116" cy="779.2" r="6.4" fill="#b4f0a4" stroke="#2aa42a" stroke-width="1.4"/><path d="M112.3,779.3l2.6,2.8l4.8,-5.6" fill="none" stroke="#22a022" stroke-width="1.8"/>
<path d="M402.5,861.4l11,-9.4v5.2h12.3v8.4h-12.3v5.2z" fill="url(#gArH)" stroke="#2c5f9c" stroke-width="1.2" stroke-linejoin="round"/>
<path d="M1390,861.4l-11,-9.4v5.2h-12.3v8.4h12.3v5.2z" fill="url(#gArH)" stroke="#2c5f9c" stroke-width="1.2" stroke-linejoin="round"/>
<path d="M1566.3,1067.2l10.4,11.4h-5.4v12h-10v-12h-5.4z" fill="url(#gArH)" stroke="#2c5f9c" stroke-width="1.2" stroke-linejoin="round"/>
<path d="M1566.3,1142.2l10.4,-11.4h-5.4v-12h-10v12h-5.4z" fill="url(#gArH)" stroke="#2c5f9c" stroke-width="1.2" stroke-linejoin="round"/>
<path d="M1490,904.2h16.4" stroke="#3c3c3c" stroke-width="1.6"/><path d="M1495.4,904v-2.2h5.6v2.2" fill="none" stroke="#3c3c3c" stroke-width="1.3"/><path d="M1491.6,905.2l1.2,12.4h10.8l1.2,-12.4" fill="#f2f2f2" stroke="#3c3c3c" stroke-width="1.4" stroke-linejoin="round"/><path d="M1495.6,907.6v7.4M1498.2,907.6v7.4M1500.8,907.6v7.4" stroke="#4a4a4a" stroke-width="1.1"/>
</svg><!--ICE-->
</body>
</html>
